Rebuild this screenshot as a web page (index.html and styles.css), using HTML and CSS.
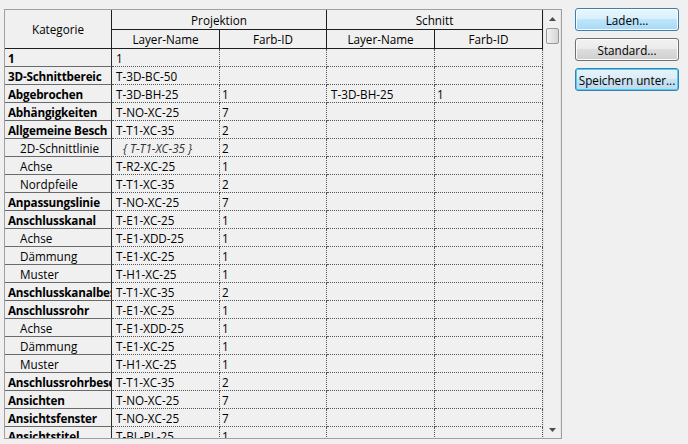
FILE: index.html
```html
<!DOCTYPE html>
<html lang="de">
<head>
<meta charset="utf-8">
<title>Layer-Zuordnung</title>
<link rel="stylesheet" href="styles.css">
</head>
<body>
<div class="app">
  <div class="frame">
    <div class="grid">
      <div class="h kat">Kategorie</div>
      <div class="h group">Projektion</div>
      <div class="h group">Schnitt</div>
      <div class="h">Layer-Name</div>
      <div class="h">Farb-ID</div>
      <div class="h">Layer-Name</div>
      <div class="h">Farb-ID</div>

      <div class="c top">1</div><div class="d ln">1</div><div class="d id"></div><div class="d ln"></div><div class="d id"></div>
      <div class="c top">3D-Schnittbereic</div><div class="d ln">T-3D-BC-50</div><div class="d id"></div><div class="d ln"></div><div class="d id"></div>
      <div class="c top">Abgebrochen</div><div class="d ln">T-3D-BH-25</div><div class="d id">1</div><div class="d ln">T-3D-BH-25</div><div class="d id">1</div>
      <div class="c top">Abhängigkeiten</div><div class="d ln">T-NO-XC-25</div><div class="d id">7</div><div class="d ln"></div><div class="d id"></div>
      <div class="c top">Allgemeine Besch</div><div class="d ln">T-T1-XC-35</div><div class="d id">2</div><div class="d ln"></div><div class="d id"></div>
      <div class="c sub">2D-Schnittlinie</div><div class="d ln inh">{ T-T1-XC-35 }</div><div class="d id">2</div><div class="d ln"></div><div class="d id"></div>
      <div class="c sub">Achse</div><div class="d ln">T-R2-XC-25</div><div class="d id">1</div><div class="d ln"></div><div class="d id"></div>
      <div class="c sub">Nordpfeile</div><div class="d ln">T-T1-XC-35</div><div class="d id">2</div><div class="d ln"></div><div class="d id"></div>
      <div class="c top">Anpassungslinie</div><div class="d ln">T-NO-XC-25</div><div class="d id">7</div><div class="d ln"></div><div class="d id"></div>
      <div class="c top">Anschlusskanal</div><div class="d ln">T-E1-XC-25</div><div class="d id">1</div><div class="d ln"></div><div class="d id"></div>
      <div class="c sub">Achse</div><div class="d ln">T-E1-XDD-25</div><div class="d id">1</div><div class="d ln"></div><div class="d id"></div>
      <div class="c sub">Dämmung</div><div class="d ln">T-E1-XC-25</div><div class="d id">1</div><div class="d ln"></div><div class="d id"></div>
      <div class="c sub">Muster</div><div class="d ln">T-H1-XC-25</div><div class="d id">1</div><div class="d ln"></div><div class="d id"></div>
      <div class="c top">Anschlusskanalbes</div><div class="d ln">T-T1-XC-35</div><div class="d id">2</div><div class="d ln"></div><div class="d id"></div>
      <div class="c top">Anschlussrohr</div><div class="d ln">T-E1-XC-25</div><div class="d id">1</div><div class="d ln"></div><div class="d id"></div>
      <div class="c sub">Achse</div><div class="d ln">T-E1-XDD-25</div><div class="d id">1</div><div class="d ln"></div><div class="d id"></div>
      <div class="c sub">Dämmung</div><div class="d ln">T-E1-XC-25</div><div class="d id">1</div><div class="d ln"></div><div class="d id"></div>
      <div class="c sub">Muster</div><div class="d ln">T-H1-XC-25</div><div class="d id">1</div><div class="d ln"></div><div class="d id"></div>
      <div class="c top">Anschlussrohrbesc</div><div class="d ln">T-T1-XC-35</div><div class="d id">2</div><div class="d ln"></div><div class="d id"></div>
      <div class="c top">Ansichten</div><div class="d ln">T-NO-XC-25</div><div class="d id">7</div><div class="d ln"></div><div class="d id"></div>
      <div class="c top">Ansichtsfenster</div><div class="d ln">T-NO-XC-25</div><div class="d id">7</div><div class="d ln"></div><div class="d id"></div>
      <div class="c top">Ansichtstitel</div><div class="d ln">T-BL-PL-25</div><div class="d id">1</div><div class="d ln"></div><div class="d id"></div>
    </div>
    <div class="scroll">
      <div class="arrow"><svg width="7" height="4" viewBox="0 0 7 4"><path d="M0 4 L3.5 0 L7 4 Z" fill="#4d4d4d"/></svg></div>
      <div class="thumb"></div>
      <div class="track"></div>
      <div class="arrow"><svg width="7" height="4" viewBox="0 0 7 4"><path d="M0 0 L3.5 4 L7 0 Z" fill="#4d4d4d"/></svg></div>
    </div>
  </div>
  <div class="buttons">
    <button class="btn hot">Laden...</button>
    <button class="btn">Standard...</button>
    <button class="btn focus">Speichern unter...</button>
  </div>
</div>
</body>
</html>
```
FILE: styles.css
```css
html, body {
  margin: 0;
  background: #f0f0f0;
}
body {
  font-family: "Open Sans", "Noto Sans", "Liberation Sans", sans-serif;
  font-size: 11.7px;
  color: #000;
  width: 688px;
  height: 444px;
  overflow: hidden;
}
.app {
  display: flex;
  align-items: flex-start;
  gap: 13px;
  padding: 9px 0 0 4px;
}
.frame {
  box-sizing: border-box;
  width: 558px;
  height: 430px;
  border: 1px solid #a0a0a0;
  display: flex;
  overflow: hidden;
}
.grid {
  display: grid;
  grid-template-columns: 107px 108px 107px 108px 108px;
  grid-template-rows: 20px 19px;
  grid-auto-rows: 18px;
  width: 538px;
  align-content: start;
}
.grid > div {
  box-sizing: border-box;
  white-space: nowrap;
  overflow: hidden;
  display: flex;
  align-items: center;
}
.h {
  justify-content: center;
  border-right: 1px solid #1e1e1e;
  border-bottom: 1px solid #1e1e1e;
}
.kat {
  grid-row: span 2;
}
.group {
  grid-column: span 2;
}
.c {
  border-right: 1px solid #2a2a2a;
  border-bottom: 1px solid #6a6a6a;
}
.top {
  font-weight: bold;
  padding-left: 3px;
  letter-spacing: -0.2px;
}
.sub {
  padding-left: 15px;
}
.d {
  border-right: 1px dotted #555;
  border-bottom: 1px dotted #555;
}
.ln {
  padding-left: 4px;
}
.id {
  padding-left: 2px;
}
.inh {
  font-style: italic;
  padding-left: 11px;
  color: #333;
}
.scroll {
  width: 18px;
  display: flex;
  flex-direction: column;
  align-items: center;
  box-shadow: inset 1px 0 0 #e6e6e6, inset -1px 0 0 #e6e6e6;
}
.arrow {
  height: 17px;
  display: flex;
  align-items: center;
  justify-content: center;
}
.thumb {
  box-sizing: border-box;
  width: 13px;
  height: 16px;
  margin-top: 1px;
  border: 1px solid #979797;
  border-radius: 2px;
  background: linear-gradient(to right, #f3f3f3, #e3e3e3 50%, #d6d6d6);
}
.track {
  flex: 1;
}
.buttons {
  display: flex;
  flex-direction: column;
  gap: 7px;
  margin-top: -1px;
}
.btn {
  box-sizing: border-box;
  width: 104px;
  height: 23px;
  padding: 0;
  font-family: inherit;
  font-size: 11.7px;
  color: #000;
  border: 1px solid #707070;
  border-radius: 3px;
  background: linear-gradient(#f2f2f2 0%, #ebebeb 45%, #dddddd 50%, #cfcfcf 100%);
  box-shadow: inset 0 0 0 1px #fcfcfc;
}
.btn.hot {
  border-color: #3c7fb1;
  background: linear-gradient(#eaf6fd 0%, #d9f0fc 45%, #bee6fd 50%, #a7d9f5 100%);
}
.btn.focus {
  border-color: #3c7fb1;
  background: linear-gradient(#e8f3fa 0%, #dcecf6 45%, #c9e2f1 50%, #bcd9ec 100%);
  box-shadow: inset 0 0 0 1px #48d0f8;
}
```
